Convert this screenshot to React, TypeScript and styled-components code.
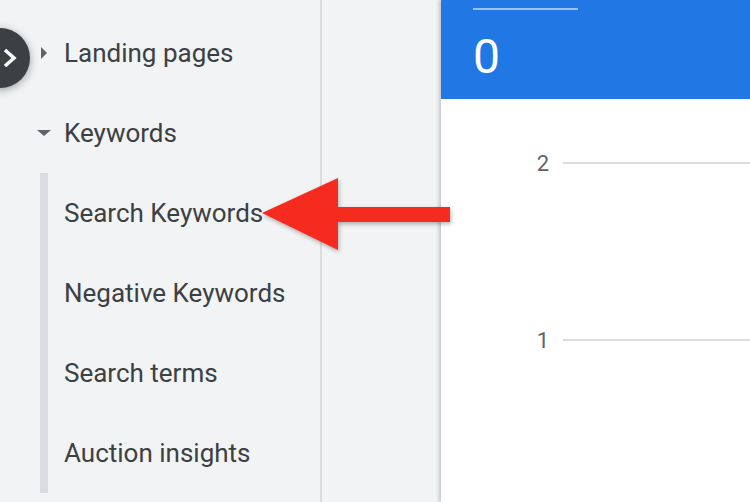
import styled, { createGlobalStyle } from "styled-components";

const GlobalStyle = createGlobalStyle`
  html, body {
    margin: 0;
    padding: 0;
    width: 750px;
    height: 502px;
    overflow: hidden;
    font-family: Roboto, "Liberation Sans", Arial, sans-serif;
  }
`;

const Page = styled.div`
  position: relative;
  display: flex;
  width: 750px;
  height: 502px;
  overflow: hidden;
  background: #f1f3f4;
`;

const Sidebar = styled.nav`
  width: 320px;
  flex-shrink: 0;
  padding-top: 13px;
  box-sizing: border-box;
  display: flex;
  flex-direction: column;
`;

const Divider = styled.div`
  width: 2px;
  flex-shrink: 0;
  background: #dadce0;
`;

const Gutter = styled.div`
  width: 119px;
  flex-shrink: 0;
`;

const Row = styled.div`
  height: 80px;
  display: flex;
  align-items: center;
  padding-left: 35px;
  gap: 11px;
  font-size: 26px;
  color: #3c4043;
`;

const Caret = styled.span`
  width: 18px;
  height: 18px;
  display: flex;
  align-items: center;
  justify-content: center;
`;

const SubGroup = styled.div`
  margin-left: 40px;
  border-left: 8px solid #dadce0;
  display: flex;
  flex-direction: column;
`;

const SubRow = styled.div`
  height: 80px;
  display: flex;
  align-items: center;
  padding-left: 16px;
  font-size: 26px;
  color: #3c4043;
`;

const Main = styled.main`
  flex: 1;
  background: #fff;
  box-shadow: -2px 0 3px rgba(60, 64, 67, 0.25);
  display: flex;
  flex-direction: column;
`;

const Header = styled.div`
  height: 99px;
  background: #2177e4;
  padding: 8px 0 0 32px;
  box-sizing: border-box;
`;

const TabLine = styled.div`
  width: 105px;
  height: 2px;
  background: rgba(255, 255, 255, 0.55);
`;

const Value = styled.div`
  margin-top: 19px;
  font-size: 48px;
  line-height: 56px;
  color: #fff;
`;

const Chart = styled.div`
  padding-top: 52px;
  display: flex;
  flex-direction: column;
  gap: 153px;
`;

const GridRow = styled.div`
  height: 24px;
  display: flex;
  align-items: center;
  gap: 14px;
`;

const Tick = styled.span`
  width: 108px;
  text-align: right;
  font-size: 22px;
  color: #5f6368;
`;

const GridLine = styled.div`
  flex: 1;
  height: 2px;
  background: #dadce0;
`;

const ToggleButton = styled.button`
  position: absolute;
  left: -30px;
  top: 28px;
  width: 60px;
  height: 60px;
  border-radius: 50%;
  border: none;
  padding: 0 0 0 32px;
  background: #3c4043;
  box-shadow: 0 2px 8px rgba(0, 0, 0, 0.35);
  display: flex;
  align-items: center;
  justify-content: flex-start;
`;

const Arrow = styled.svg`
  position: absolute;
  left: 255px;
  top: 172px;
  filter: drop-shadow(1px 2px 2px rgba(0, 0, 0, 0.3));
`;

const items = ["Search Keywords", "Negative Keywords", "Search terms", "Auction insights"];

export default function App() {
  return (
    <>
      <GlobalStyle />
      <Page>
        <Sidebar>
          <Row>
            <Caret>
              <svg width="8" height="12" viewBox="0 0 8 12">
                <path d="M1 0 L7 6 L1 12 Z" fill="#5f6368" />
              </svg>
            </Caret>
            Landing pages
          </Row>
          <Row>
            <Caret>
              <svg width="14" height="8" viewBox="0 0 14 8">
                <path d="M0 1 L14 1 L7 7 Z" fill="#5f6368" />
              </svg>
            </Caret>
            Keywords
          </Row>
          <SubGroup>
            {items.map((t) => (
              <SubRow key={t}>{t}</SubRow>
            ))}
          </SubGroup>
        </Sidebar>
        <Divider />
        <Gutter />
        <Main>
          <Header>
            <TabLine />
            <Value>0</Value>
          </Header>
          <Chart>
            <GridRow>
              <Tick>2</Tick>
              <GridLine />
            </GridRow>
            <GridRow>
              <Tick>1</Tick>
              <GridLine />
            </GridRow>
          </Chart>
        </Main>
        <ToggleButton aria-label="expand">
          <svg width="16" height="20" viewBox="0 0 16 20">
            <path d="M3 2 L12 10 L3 18" stroke="#fff" strokeWidth="3.5" fill="none" />
          </svg>
        </ToggleButton>
        <Arrow width="200" height="84" viewBox="0 0 200 84">
          <path d="M7 41 L83 6 L83 35 L195 35 L195 50 L83 50 L83 78 Z" fill="#f52b1f" />
        </Arrow>
      </Page>
    </>
  );
}
